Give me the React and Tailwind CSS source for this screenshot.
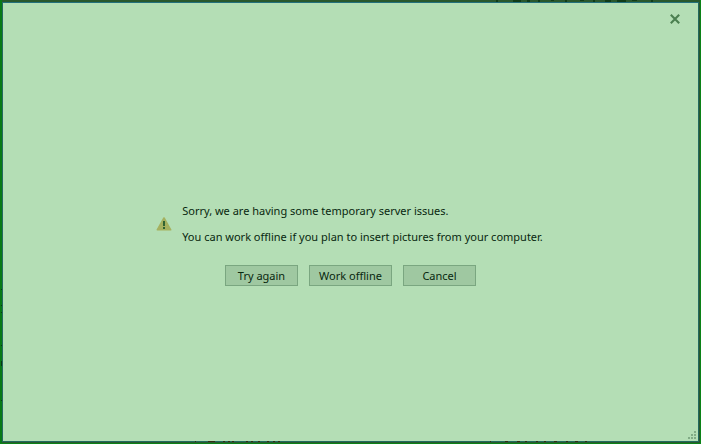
import React from "react";

const actions = [
  { label: "Try again", width: "w-[73px]" },
  { label: "Work offline", width: "w-[83px]" },
  { label: "Cancel", width: "w-[73px]" },
];

function WarningIcon() {
  return (
    <svg className="h-4 w-4 shrink-0" viewBox="0 0 16 16" aria-hidden="true">
      <path d="M8 2 14.7 13.8H1.3Z" fill="#a5b15f" stroke="#a5b15f" strokeWidth="1.6" strokeLinejoin="round" />
      <path d="M7 5h2v5H7zM7 11h2v2H7z" fill="#316332" />
    </svg>
  );
}

function CloseIcon() {
  return (
    <svg className="h-[10px] w-[10px]" viewBox="0 0 10 10" aria-hidden="true">
      <path d="M.8.8 9.2 9.2M9.2.8.8 9.2" fill="none" stroke="#4b7f50" strokeWidth="2.1" />
    </svg>
  );
}

function ResizeGrip() {
  return (
    <svg className="h-2 w-2" viewBox="0 0 8 8" shapeRendering="crispEdges" aria-hidden="true">
      <path d="M6 0h2v2H6zM3 3h2v2H3zM6 3h2v2H6zM0 6h2v2H0zM3 6h2v2H3zM6 6h2v2H6z" fill="#80ab85" />
    </svg>
  );
}

function BackdropMarks() {
  return (
    <div className="pointer-events-none absolute inset-0" aria-hidden="true">
      <svg className="absolute top-0 right-[40px] h-[2px] w-[170px]" viewBox="0 0 170 2" shapeRendering="crispEdges">
        <path d="M6 0h2v2H6zM23 0h8v2h-8zM37 0h3v2h-3zM48 0h2v2h-2zM61 0h3v1h-3zM75 0h2v2h-2zM90 0h4v1h-4zM103 0h2v2h-2zM115 0h6v2h-6zM127 0h9v2h-9zM142 0h5v1h-5zM161 0h2v2h-2z" fill="#103c18" />
      </svg>
      <svg className="absolute bottom-0 left-0 h-[164px] w-[2px]" viewBox="0 0 2 164" shapeRendering="crispEdges">
        <path d="M1 10h1v1H1zM1 26h1v1H1zM1 33h1v1H1zM1 66h1v1H1zM1 82h1v5H1zM1 121h1v1H1z" fill="#093b12" />
      </svg>
      <svg className="absolute bottom-px left-[180px] h-px w-[410px]" viewBox="0 0 410 1" shapeRendering="crispEdges">
        <path d="M15 0h1v1h-1zM28 0h7v1h-7zM43 0h2v1h-2zM48 0h2v1h-2zM52 0h2v1h-2zM66 0h2v1h-2zM71 0h2v1h-2zM78 0h2v1h-2zM87 0h2v1h-2zM93 0h2v1h-2zM98 0h2v1h-2zM310 0h1v1h-1zM325 0h3v1h-3zM337 0h3v1h-3zM345 0h2v1h-2zM356 0h2v1h-2zM364 0h2v1h-2zM374 0h3v1h-3zM386 0h2v1h-2zM395 0h3v1h-3zM405 0h2v1h-2z" fill="#332c14" />
      </svg>
    </div>
  );
}

export default function App() {
  return (
    <div className="relative flex min-h-screen flex-col border-r border-b border-[#0b8217] bg-[#29582d] font-['Noto_Sans','Open_Sans',sans-serif] text-[11px] leading-4 text-[#08270f]">
      <div className="flex flex-1 flex-col border-l-2 border-l-[#087a17] pt-[2px] pr-px pb-px">
        <main role="dialog" aria-labelledby="message" className="flex flex-1 flex-col border border-[#23695f] border-t-[#23707c] bg-[#b4deb5]">
          <header className="flex h-[54px] items-start justify-end pt-1 pr-[11px]">
            <button type="button" aria-label="Close" className="flex h-6 w-6 items-center justify-center">
              <CloseIcon />
            </button>
          </header>
          <section className="flex flex-1 flex-col items-center justify-center gap-5">
            <div className="flex items-center gap-[10px] pr-[2px]">
              <WarningIcon />
              <div className="flex flex-col gap-[10px]">
                <p id="message">Sorry, we are having some temporary server issues.</p>
                <p>You can work offline if you plan to insert pictures from your computer.</p>
              </div>
            </div>
            <div className="flex gap-[11px]">
              {actions.map(({ label, width }) => (
                <button key={label} type="button" className={`h-[21px] border border-[#7aa680] bg-[#9fc8a1] pt-px ${width}`}>
                  {label}
                </button>
              ))}
            </div>
          </section>
          <footer className="flex h-[10px] justify-end pr-[2px]">
            <ResizeGrip />
          </footer>
        </main>
      </div>
      <BackdropMarks />
    </div>
  );
}
